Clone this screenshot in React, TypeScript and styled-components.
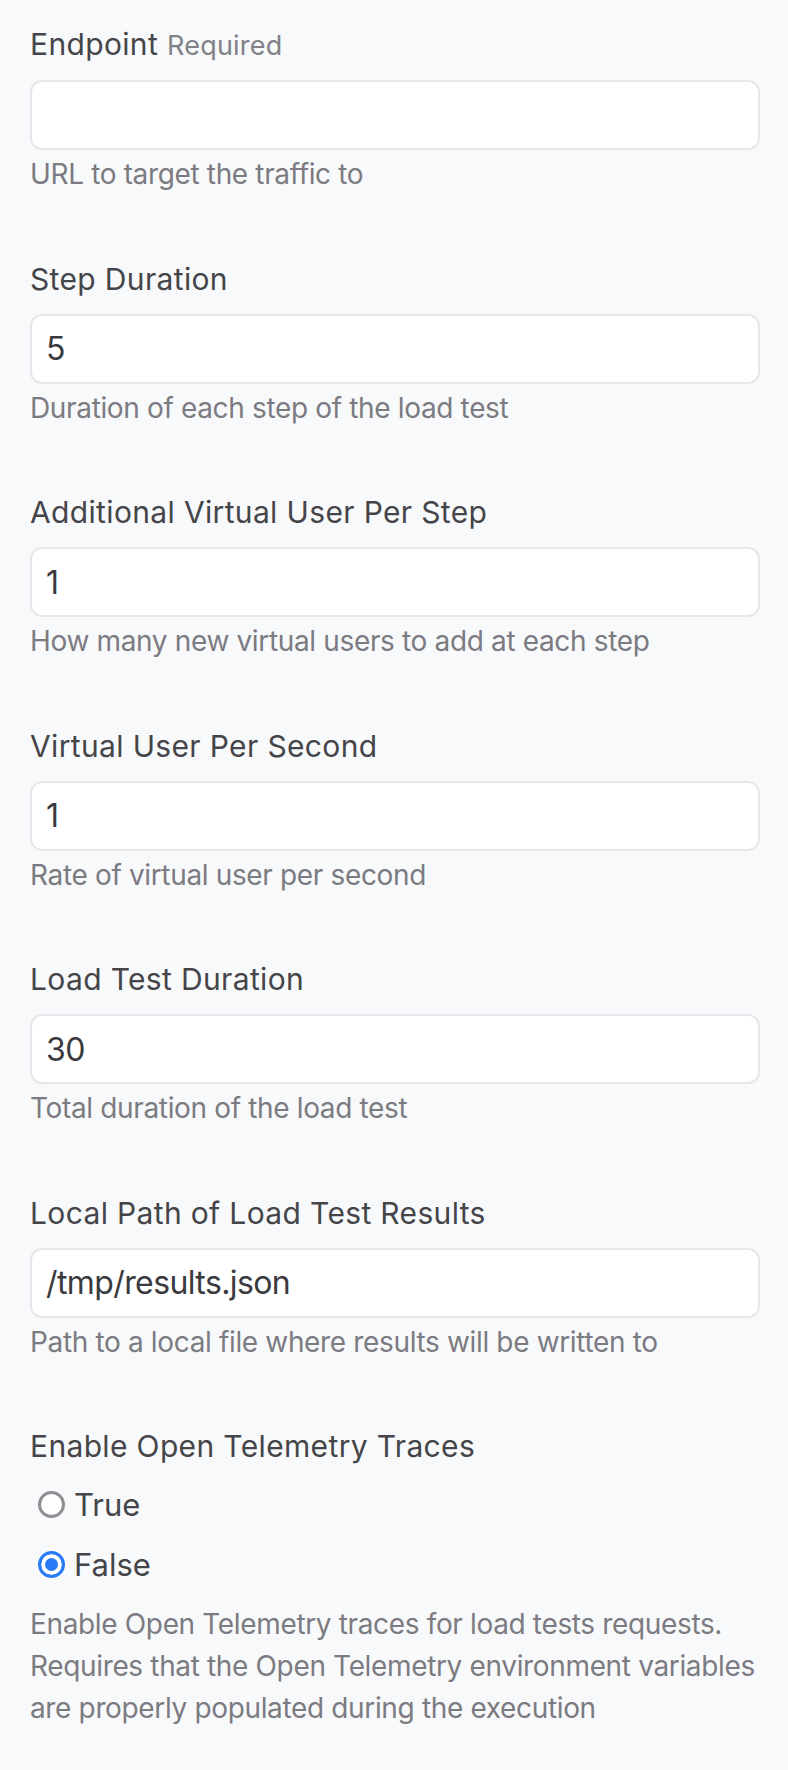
import { FC, useState } from "react";
import styled, { createGlobalStyle } from "styled-components";

const GlobalStyle = createGlobalStyle`
  html, body {
    margin: 0;
    padding: 0;
    background: #f8f9fb;
  }
  body {
    font-family: Inter, "Noto Sans", "Liberation Sans", sans-serif;
    -webkit-font-smoothing: antialiased;
  }
`;

const Page = styled.div`
  box-sizing: border-box;
  width: 788px;
  min-height: 1770px;
  padding: 22px 28px 0 30px;
  background: #f8f9fb;
`;

const Field = styled.div`
  display: flex;
  flex-direction: column;
  margin-bottom: 61.5px;
`;

const Label = styled.label`
  font-size: 30px;
  line-height: 45px;
  letter-spacing: 0.35px;
  color: #454549;
  font-weight: 400;
`;

const Required = styled.span`
  font-size: 27px;
  letter-spacing: 0.2px;
  color: #818187;
  margin-left: 9px;
`;

const Input = styled.input`
  box-sizing: border-box;
  margin-top: 12px;
  width: 100%;
  height: 70px;
  padding: 0 14px;
  border: 2px solid #e7e7eb;
  border-radius: 12px;
  background: #fff;
  font-family: inherit;
  font-size: 32px;
  letter-spacing: -0.6px;
  color: #3a3a3e;
  outline: none;
`;

const Help = styled.p<{ spaced?: boolean }>`
  margin: ${({ spaced }) => (spaced ? "9px 0 0" : "3px 0 0")};
  font-size: 28px;
  line-height: 42px;
  letter-spacing: -0.35px;
  color: #7b7b81;
`;

const RadioList = styled.div`
  display: flex;
  flex-direction: column;
  margin-top: 5px;
`;

const RadioRow = styled.label`
  display: flex;
  align-items: center;
  height: 60px;
  padding-left: 8px;
  font-size: 31px;
  color: #454549;
  cursor: pointer;
`;

const RadioDot = styled.span<{ checked: boolean }>`
  box-sizing: border-box;
  flex-shrink: 0;
  width: 27px;
  height: 27px;
  margin-right: 9px;
  border-radius: 50%;
  border: ${({ checked }) => (checked ? "3px solid #2c7bf6" : "3px solid #8e8e94")};
  background: ${({ checked }) => (checked ? "#2c7bf6" : "#fff")};
  box-shadow: ${({ checked }) => (checked ? "inset 0 0 0 4px #fff" : "none")};
`;

interface IFieldData {
  label: string;
  value: string;
  help: string;
  required?: boolean;
}

const fields: IFieldData[] = [
  { label: "Endpoint", value: "", help: "URL to target the traffic to", required: true },
  { label: "Step Duration", value: "5", help: "Duration of each step of the load test" },
  {
    label: "Additional Virtual User Per Step",
    value: "1",
    help: "How many new virtual users to add at each step",
  },
  { label: "Virtual User Per Second", value: "1", help: "Rate of virtual user per second" },
  { label: "Load Test Duration", value: "30", help: "Total duration of the load test" },
  {
    label: "Local Path of Load Test Results",
    value: "/tmp/results.json",
    help: "Path to a local file where results will be written to",
  },
];

const TextField: FC<{ data: IFieldData }> = ({ data }) => (
  <Field>
    <Label>
      {data.label}
      {data.required && <Required>Required</Required>}
    </Label>
    <Input defaultValue={data.value} />
    <Help>{data.help}</Help>
  </Field>
);

const App: FC = () => {
  const [traces, setTraces] = useState<boolean>(false);

  return (
    <>
      <GlobalStyle />
      <Page>
        {fields.map((f) => (
          <TextField key={f.label} data={f} />
        ))}
        <Field>
          <Label>Enable Open Telemetry Traces</Label>
          <RadioList>
            <RadioRow onClick={() => setTraces(true)}>
              <RadioDot checked={traces} />
              True
            </RadioRow>
            <RadioRow onClick={() => setTraces(false)}>
              <RadioDot checked={!traces} />
              False
            </RadioRow>
          </RadioList>
          <Help spaced>
            Enable Open Telemetry traces for load tests requests. Requires that the Open
            Telemetry environment variables are properly populated during the execution
          </Help>
        </Field>
      </Page>
    </>
  );
};

export default App;
